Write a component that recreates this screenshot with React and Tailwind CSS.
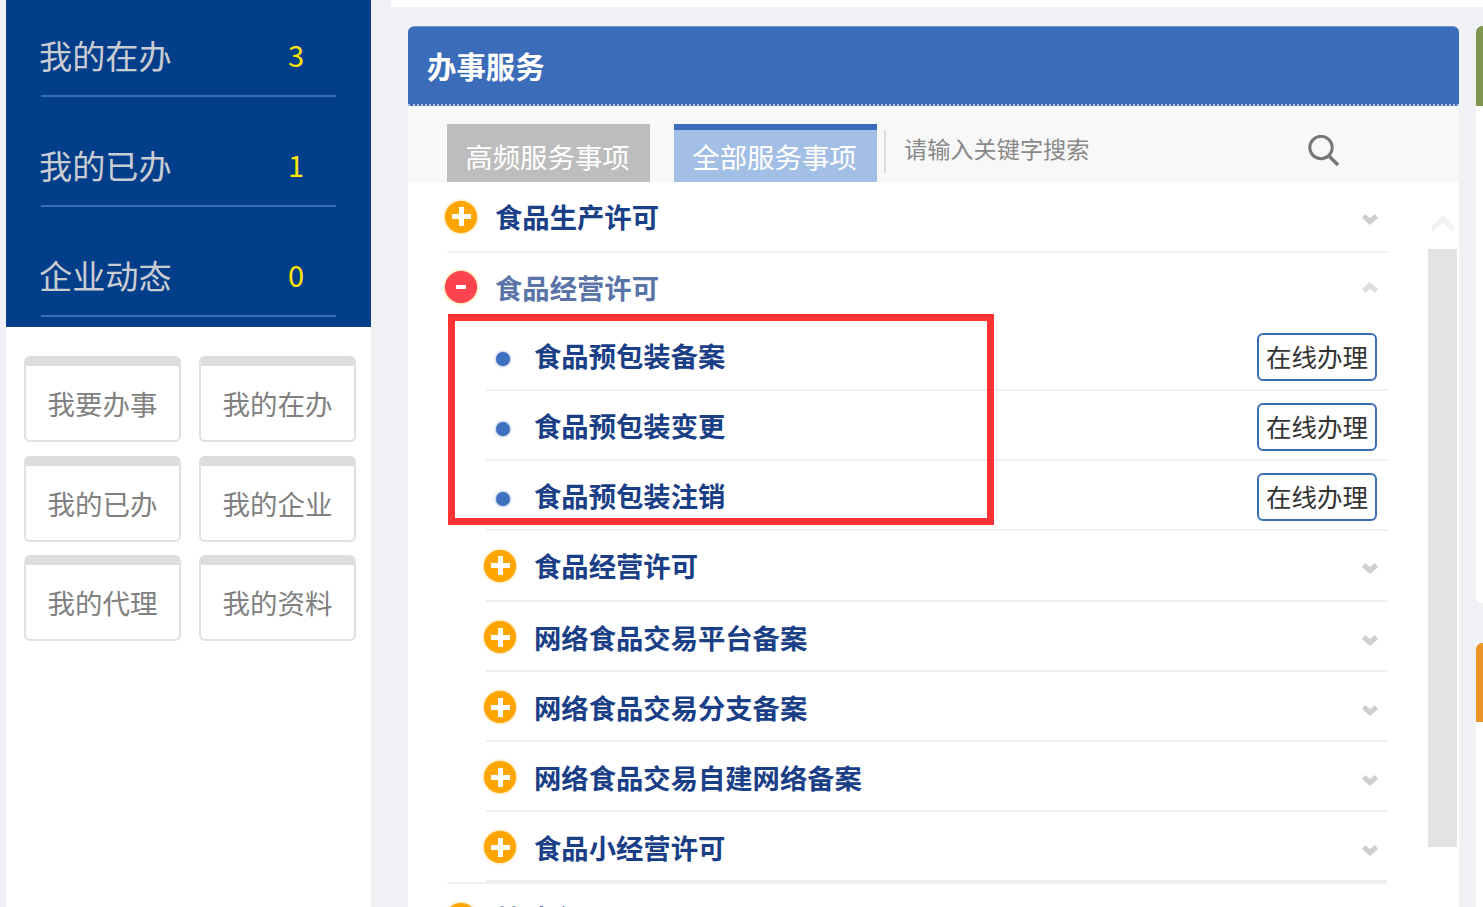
const stats = [
  { label: '我的在办', count: 3 },
  { label: '我的已办', count: 1 },
  { label: '企业动态', count: 0 },
];

const shortcuts = ['我要办事', '我的在办', '我的已办', '我的企业', '我的代理', '我的资料'];

const packRows = ['食品预包装备案', '食品预包装变更', '食品预包装注销'];

const subRows = ['食品经营许可', '网络食品交易平台备案', '网络食品交易分支备案', '网络食品交易自建网络备案', '食品小经营许可'];

function PlusIcon() {
  return (
    <span className="flex h-8 w-8 shrink-0 items-center justify-center rounded-full bg-[#ffa500] shadow-[0_0_3px_rgba(255,165,0,0.7)]">
      <svg width="19" height="19" viewBox="0 0 19 19">
        <path d="M7 0h5v7h7v5h-7v7H7v-7H0V7h7z" fill="#fff" />
      </svg>
    </span>
  );
}

function MinusIcon() {
  return (
    <span className="flex h-8 w-8 shrink-0 items-center justify-center rounded-full bg-[#fb4450] shadow-[0_0_3px_rgba(255,165,0,0.8)]">
      <span className="h-[4px] w-[10px] bg-white" />
    </span>
  );
}

function Chevron({ up }) {
  return (
    <svg width="16" height="11" viewBox="0 0 16 11" className={up ? 'ml-auto mr-[9px]' : 'ml-auto mr-[9px] mt-1.5'}>
      <path
        d={up ? 'M8 0l8 7-3 4-5-4-5 4-3-4z' : 'M3 0l5 4 5-4 3 4-8 7-8-7z'}
        fill={up ? '#dedede' : '#cfcfcf'}
      />
    </svg>
  );
}

function ServiceCard() {
  return (
    <div className="w-[1051px] shrink-0 bg-white">
      <div className="flex h-[80px] flex-col rounded-t-md border-t border-[#6f94cf] bg-[#3b6cb9]">
        <div className="flex flex-1 items-center pl-[19px]">
          <h2 className="text-[29.4px] font-bold text-white">办事服务</h2>
        </div>
        <div className="border-b-2 border-dotted border-[#b5c7e3]" />
      </div>
      <div className="flex h-[76px] items-end bg-[#f8f8f8] pl-[39px]">
        <div className="flex h-[58px] w-[203px] items-center justify-center bg-[#bdbdbd] pt-2 pr-0.5 text-[27.4px] text-white">高频服务事项</div>
        <div className="ml-6 flex h-[58px] w-[203px] items-center justify-center border-t-[6px] border-[#3b6cb9] bg-[#a4bfe5] pt-0.5 pr-0.5 text-[27.4px] text-white">全部服务事项</div>
        <div className="mb-[9px] ml-[7px] h-[43px] w-[2px] bg-[#dcdcdc]" />
        <div className="mb-[9px] flex h-[43px] w-[422px] items-center pb-[6px] pl-[18px] text-[23.2px] text-[#888]">请输入关键字搜索</div>
        <svg width="32" height="31" viewBox="0 0 32 31" className="mb-[16px]">
          <circle cx="13" cy="12.5" r="11.2" fill="none" stroke="#777" strokeWidth="3" />
          <path d="M21 21l9 9" stroke="#777" strokeWidth="3.4" />
        </svg>
      </div>
      <div className="flex">
        <div className="ml-[39px] w-[940px]">
          <div className="flex h-[71px] items-center border-b-2 border-[#f0f0f0]">
            <span className="-ml-0.5"><PlusIcon /></span>
            <span className="ml-[18px] text-[27.33px] font-bold text-[#1a3f87]">食品生产许可</span>
            <Chevron />
          </div>
          <div className="flex h-[68px] items-center">
            <span className="-ml-0.5"><MinusIcon /></span>
            <span className="ml-[18px] text-[27.33px] font-bold text-[#5a74a8]">食品经营许可</span>
            <Chevron up />
          </div>
          <div className="relative ml-[39px]">
            {packRows.map((name) => (
              <div key={name} className="flex h-[70px] items-center border-b-2 border-[#f0f0f0] pt-0.5">
                <span className="ml-[10px] mt-1.5 h-[14px] w-[14px] rounded-full bg-[#3f70c0] shadow-[0_0_3px_rgba(63,112,192,0.8)]" />
                <span className="-mt-0.5 ml-[24px] text-[27.33px] font-bold text-[#1a3f87]">{name}</span>
                <span className="ml-auto mr-[10px] mt-px flex h-[48px] w-[120px] items-center justify-center rounded-md border-2 border-[#3b6cb9] text-[25.5px] text-[#333]">在线办理</span>
              </div>
            ))}
            <div className="absolute -left-[38px] -top-[7px] h-[211px] w-[546px] border-[7px] border-[#ff3333]" />
            {subRows.map((name, i) => (
              <div key={name} className={`flex items-center border-b-2 border-[#f0f0f0] ${i === 0 ? 'h-[71px]' : 'h-[70px] pt-0.5'}`}>
                <span className="-ml-0.5"><PlusIcon /></span>
                <span className="ml-[18px] text-[27.33px] font-bold text-[#1a3f87]">{name}</span>
                <Chevron />
              </div>
            ))}
          </div>
          <div className="flex h-[71px] items-center border-t-2 border-[#f0f0f0]">
            <span className="-ml-0.5"><PlusIcon /></span>
            <span className="ml-[18px] text-[27.33px] font-bold text-[#1a3f87]">特殊食品</span>
            <Chevron />
          </div>
        </div>
        <div className="ml-[41px] w-[29px] pt-[33px]">
          <svg width="22" height="18" viewBox="0 0 22 18" className="ml-1">
            <path d="M11 0l11 11v7L11 8 0 18v-7z" fill="#f2f2f2" />
          </svg>
          <div className="mt-4 h-[598px] bg-[#e3e3e3]" />
        </div>
      </div>
    </div>
  );
}

function App() {
  return (
    <div className="flex h-[907px] overflow-hidden bg-[#eff1f5] pl-1.5 font-['Noto_Sans_CJK_SC',sans-serif]">
      <aside className="w-[365px] shrink-0 bg-white">
        <div className="h-[327px] overflow-hidden bg-[#033e8a] px-[35px]">
          <div className="-mt-[13px]">
            {stats.map((s) => (
              <div key={s.label} className="flex h-[110px] items-center justify-between border-b-2 border-[#3b6cb9] pt-7 pr-[32px]">
                <span className="-ml-0.5 text-[33.2px] text-[#c9cdd3]">{s.label}</span>
                <span className="text-[29px] text-[#ffe600]">{s.count}</span>
              </div>
            ))}
          </div>
        </div>
        <div className="grid grid-cols-[157px_157px] gap-x-[18px] gap-y-[14px] pl-[18px] pt-[29px]">
          {shortcuts.map((name, i) => (
            <div
              key={name}
              className={`flex h-[86px] items-center justify-center rounded-md border-2 border-t-[10px] border-[#e0e0e0] border-t-[#dddddd] pt-0.5 text-[27.5px] text-[#808080] ${i > 3 ? '-mt-px' : ''}`}
            >
              {name}
            </div>
          ))}
        </div>
      </aside>
      <main className="ml-5 flex-1">
        <div className="h-[7px] bg-white" />
        <div className="flex gap-[17px] pl-[17px] pt-[19px]">
          <ServiceCard />
          <div className="flex-1">
            <div className="h-[577px] rounded-bl-md bg-white">
              <div className="h-[80px] rounded-tl-md bg-[#7f9650]" />
            </div>
            <div className="mt-10 h-[300px] bg-white">
              <div className="h-[79px] rounded-tl-md bg-[#eb9529]" />
            </div>
          </div>
        </div>
      </main>
    </div>
  );
}

export default App;
